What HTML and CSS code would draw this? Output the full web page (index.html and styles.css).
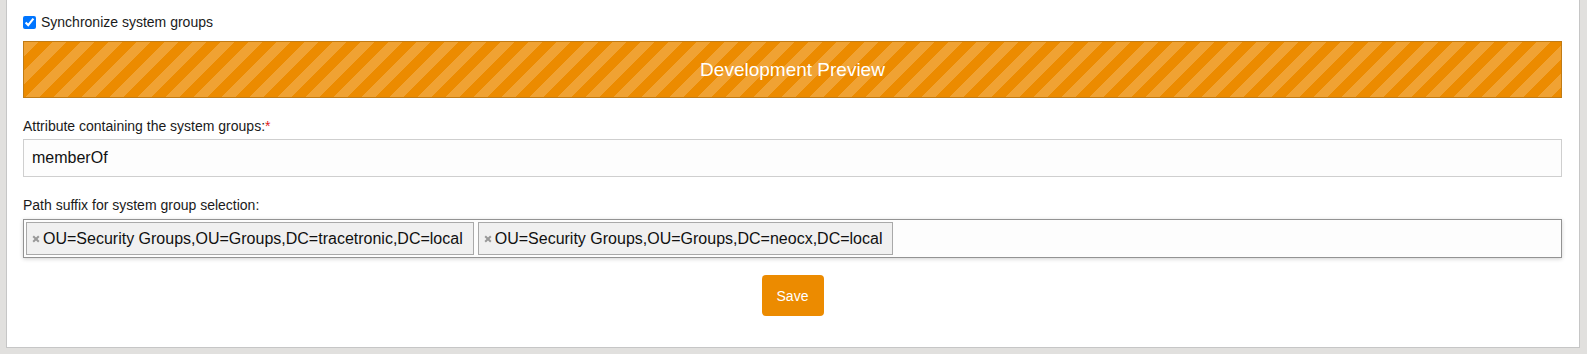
FILE: index.html
```html
<!DOCTYPE html>
<html>
<head>
<meta charset="utf-8">
<link rel="stylesheet" href="styles.css">
</head>
<body>
<div class="panel">
  <label class="check-row">
    <input type="checkbox" checked class="check">
    <span>Synchronize system groups</span>
  </label>
  <div class="banner">Development Preview</div>
  <div class="label label-first">Attribute containing the system groups:<span class="req">*</span></div>
  <div class="text-input">memberOf</div>
  <div class="label label-second">Path suffix for system group selection:</div>
  <div class="tag-input">
    <span class="tag"><svg class="tag-x" width="8" height="8" viewBox="0 0 8 8"><path d="M1.2 1.2L6.8 6.8M6.8 1.2L1.2 6.8" stroke="#999" stroke-width="2"/></svg>OU=Security Groups,OU=Groups,DC=tracetronic,DC=local</span>
    <span class="tag"><svg class="tag-x" width="8" height="8" viewBox="0 0 8 8"><path d="M1.2 1.2L6.8 6.8M6.8 1.2L1.2 6.8" stroke="#999" stroke-width="2"/></svg>OU=Security Groups,OU=Groups,DC=neocx,DC=local</span>
  </div>
  <div class="actions">
    <button class="save">Save</button>
  </div>
</div>
</body>
</html>
```

FILE: styles.css
```css
html, body {
  margin: 0;
  padding: 0;
}
body {
  background: #e1e0de;
  font-family: Arial, "Liberation Sans", sans-serif;
  color: #1a1a1a;
  height: 354px;
  overflow: hidden;
}
.panel {
  margin: 0 7px 0 6px;
  background: #fff;
  border: 1px solid #c6c6c6;
  border-top: none;
  padding: 12px 17px 31px 16px;
  display: flex;
  flex-direction: column;
}
.check-row {
  display: flex;
  align-items: center;
  gap: 5px;
  font-size: 14px;
  line-height: 20px;
  height: 20px;
}
.check {
  margin: 0;
  width: 13px;
  height: 13px;
  accent-color: #0075ff;
}
.banner {
  margin-top: 9px;
  height: 55px;
  border: 1px solid #c17b14;
  background-color: #ec8b00;
  background-image: linear-gradient(135deg,
    rgba(255,255,255,0.2) 25%, transparent 25%,
    transparent 50%, rgba(255,255,255,0.2) 50%,
    rgba(255,255,255,0.2) 75%, transparent 75%, transparent);
  background-size: 28px 28px;
  color: #fff;
  font-size: 19px;
  line-height: 55px;
  text-align: center;
}
.label {
  font-size: 14px;
  line-height: 20px;
}
.label-first {
  margin-top: 18px;
}
.label-second {
  margin-top: 18px;
}
.req {
  color: #e02020;
}
.text-input {
  margin-top: 3px;
  height: 36px;
  border: 1px solid #cfcfcf;
  background: #fdfdfd;
  padding-left: 8px;
  font-size: 16px;
  line-height: 36px;
  color: #111;
}
.tag-input {
  margin-top: 4px;
  height: 33px;
  padding: 2px;
  border: 1px solid #939393;
  background: #fdfdfd;
  box-shadow: 0 1px 4px rgba(0,0,0,0.18);
  display: flex;
  gap: 4px;
}
.tag {
  display: inline-flex;
  align-items: center;
  height: 31px;
  border: 1px solid #a9a9a9;
  background: #f0f0f0;
  padding: 0 10px 0 5px;
  font-size: 16px;
  color: #111;
  white-space: nowrap;
}
.tag-x {
  margin-right: 3px;
  margin-top: 1px;
}
.actions {
  margin-top: 17px;
  display: flex;
  justify-content: center;
}
.save {
  width: 62px;
  height: 41px;
  border: none;
  border-radius: 4px;
  background: #ec8b00;
  color: #fff;
  font-family: Arial, "Liberation Sans", sans-serif;
  font-size: 14px;
  padding: 0;
}
```
